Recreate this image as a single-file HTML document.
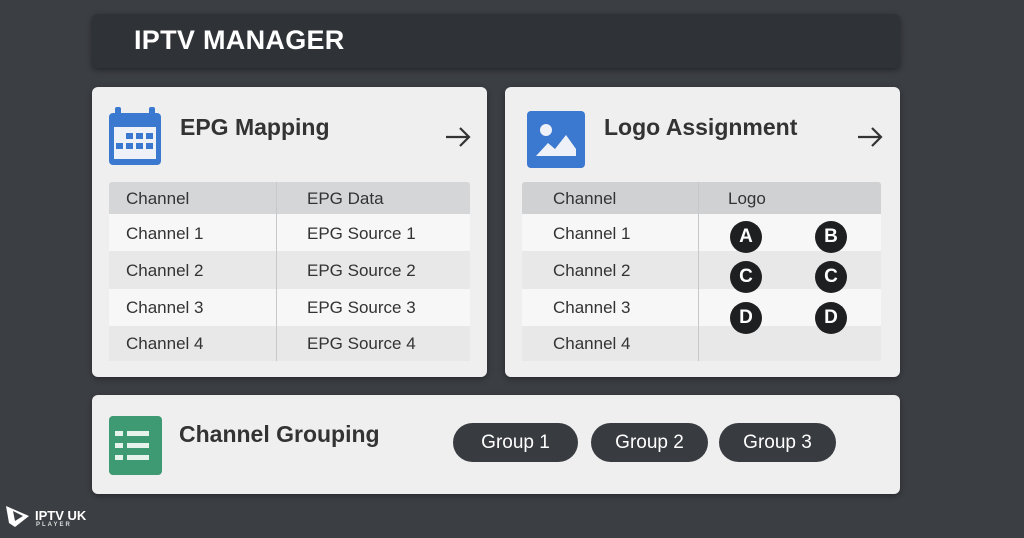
<!DOCTYPE html><html><head><style>
*{margin:0;padding:0;box-sizing:border-box}
body{width:1024px;height:538px;background:#3b3e43;font-family:"Liberation Sans",sans-serif;position:relative;overflow:hidden;color:#2e2f31}
.a{position:absolute}
.card{position:absolute;background:#efefef;border-radius:6px;box-shadow:0 2px 6px rgba(0,0,0,.35)}
.t{position:absolute;font-size:17px;color:#333}
.h{font-weight:bold;font-size:23px;color:#333}
.c{position:absolute;width:32px;height:32px;border-radius:50%;background:#1e1f21;color:#fff;font-weight:bold;font-size:19px;text-align:center;line-height:32px}
.pill{position:absolute;top:423px;height:39px;border-radius:20px;background:#383b40;color:#fff;font-size:19px;text-align:center;line-height:39px}
</style></head><body>
<div class="a" style="left:92px;top:14px;width:808px;height:54px;background:#2f3237;border-radius:5px;box-shadow:0 2px 6px rgba(0,0,0,.4)"></div>
<div class="a" style="left:134px;top:25px;color:#fff;font-weight:bold;font-size:27px;letter-spacing:.3px">IPTV MANAGER</div>

<div class="card" style="left:92px;top:87px;width:395px;height:290px"></div>
<svg class="a" style="left:109px;top:107px" width="52" height="58"><rect x="0" y="6" width="52" height="52" rx="4" fill="#3b78cf"/><rect x="6" y="0" width="6" height="12" rx="2" fill="#3b78cf"/><rect x="40" y="0" width="6" height="12" rx="2" fill="#3b78cf"/><rect x="5" y="20" width="42" height="32" fill="#eef1f7"/><g fill="#3b78cf"><rect x="17" y="26" width="7" height="6"/><rect x="27" y="26" width="7" height="6"/><rect x="37" y="26" width="7" height="6"/><rect x="7" y="36" width="7" height="6"/><rect x="17" y="36" width="7" height="6"/><rect x="27" y="36" width="7" height="6"/><rect x="37" y="36" width="7" height="6"/></g></svg>
<div class="a h" style="left:180px;top:114px">EPG Mapping</div>
<svg class="a" style="left:444px;top:126px" width="28" height="22"><path d="M2 11 H25 M16 2 L25 11 L16 20" stroke="#333" stroke-width="2.2" fill="none"/></svg>
<div class="a" style="left:109px;top:182px;width:361px;height:32px;background:#d5d6d8;border-radius:3px 3px 0 0"></div>
<div class="a" style="left:109px;top:214px;width:361px;height:37px;background:#f7f7f7"></div>
<div class="a" style="left:109px;top:251px;width:361px;height:38px;background:#e8e8e9"></div>
<div class="a" style="left:109px;top:289px;width:361px;height:37px;background:#f7f7f7"></div>
<div class="a" style="left:109px;top:326px;width:361px;height:35px;background:#e8e8e9"></div>
<div class="a" style="left:276px;top:182px;width:1px;height:179px;background:#c8c8ca"></div>
<div class="t" style="left:126px;top:189px">Channel</div><div class="t" style="left:307px;top:189px">EPG Data</div>
<div class="t" style="left:126px;top:224px">Channel 1</div><div class="t" style="left:307px;top:224px">EPG Source 1</div>
<div class="t" style="left:126px;top:261px">Channel 2</div><div class="t" style="left:307px;top:261px">EPG Source 2</div>
<div class="t" style="left:126px;top:298px">Channel 3</div><div class="t" style="left:307px;top:298px">EPG Source 3</div>
<div class="t" style="left:126px;top:334px">Channel 4</div><div class="t" style="left:307px;top:334px">EPG Source 4</div>

<div class="card" style="left:505px;top:87px;width:395px;height:290px"></div>
<svg class="a" style="left:527px;top:111px" width="58" height="57"><rect width="58" height="57" rx="4" fill="#3b78cf"/><circle cx="19" cy="19" r="6" fill="#eef1f7"/><path d="M9 45 L21 32 L28 38 L39 24 L49 38 L49 45 Z" fill="#eef1f7"/></svg>
<div class="a h" style="left:604px;top:114px">Logo Assignment</div>
<svg class="a" style="left:856px;top:126px" width="28" height="22"><path d="M2 11 H25 M16 2 L25 11 L16 20" stroke="#333" stroke-width="2.2" fill="none"/></svg>
<div class="a" style="left:522px;top:182px;width:359px;height:32px;background:#d0d1d3;border-radius:3px 3px 0 0"></div>
<div class="a" style="left:522px;top:214px;width:359px;height:37px;background:#f7f7f7"></div>
<div class="a" style="left:522px;top:251px;width:359px;height:38px;background:#e8e8e9"></div>
<div class="a" style="left:522px;top:289px;width:359px;height:37px;background:#f7f7f7"></div>
<div class="a" style="left:522px;top:326px;width:359px;height:35px;background:#e8e8e9"></div>
<div class="a" style="left:698px;top:182px;width:1px;height:179px;background:#c8c8ca"></div>
<div class="t" style="left:553px;top:189px">Channel</div><div class="t" style="left:728px;top:189px">Logo</div>
<div class="t" style="left:553px;top:224px">Channel 1</div>
<div class="t" style="left:553px;top:261px">Channel 2</div>
<div class="t" style="left:553px;top:298px">Channel 3</div>
<div class="t" style="left:553px;top:334px">Channel 4</div>
<div class="c" style="left:730px;top:221px">A</div><div class="c" style="left:815px;top:221px">B</div>
<div class="c" style="left:730px;top:261px">C</div><div class="c" style="left:815px;top:261px">C</div>
<div class="c" style="left:730px;top:302px">D</div><div class="c" style="left:815px;top:302px">D</div>

<div class="card" style="left:92px;top:395px;width:808px;height:99px"></div>
<svg class="a" style="left:109px;top:416px" width="53" height="59"><rect width="53" height="59" rx="4" fill="#3d9a72"/><g fill="#e6f3ec"><rect x="6" y="15" width="8" height="5"/><rect x="18" y="15" width="22" height="5"/><rect x="6" y="27" width="8" height="5"/><rect x="18" y="27" width="22" height="5"/><rect x="6" y="39" width="8" height="5"/><rect x="18" y="39" width="22" height="5"/></g></svg>
<div class="a h" style="left:179px;top:421px">Channel Grouping</div>
<div class="pill" style="left:453px;width:125px">Group 1</div>
<div class="pill" style="left:591px;width:117px">Group 2</div>
<div class="pill" style="left:719px;width:117px">Group 3</div>

<svg class="a" style="left:3px;top:503px" width="30" height="26"><path d="M3 3 L26 13 L12 24 L6 20 Z" fill="#fff"/><path d="M10 8 L20 13 L12 18 Z" fill="#3b3e43"/></svg>
<div class="a" style="left:35px;top:509px;color:#fff;font-weight:bold;font-size:13px;line-height:13px">IPTV UK</div>
<div class="a" style="left:36px;top:522px;color:#ddd;font-weight:bold;font-size:6px;letter-spacing:2px">PLAYER</div>
</body></html>
